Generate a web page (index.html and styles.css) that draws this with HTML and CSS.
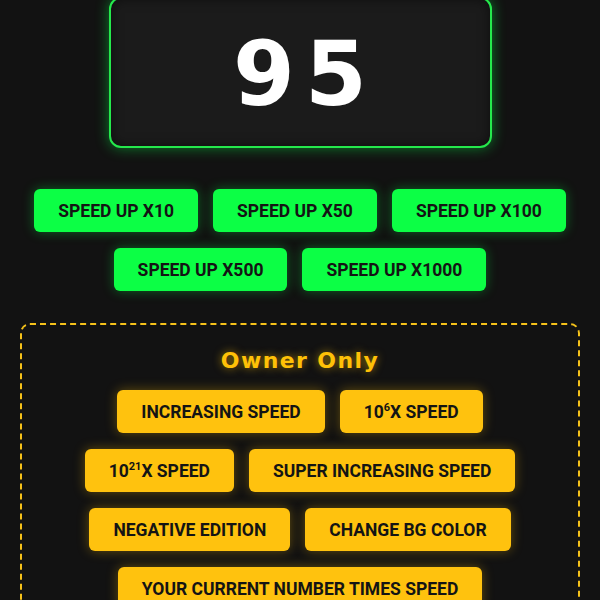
FILE: index.html
```html
<!DOCTYPE html>
<html>
<head>
<meta charset="utf-8">
<link rel="stylesheet" href="styles.css">
</head>
<body>
<main class="page">
  <div class="display"><span class="number">95</span></div>
  <div class="speed-buttons">
    <button class="btn btn-green">SPEED UP X10</button>
    <button class="btn btn-green">SPEED UP X50</button>
    <button class="btn btn-green">SPEED UP X100</button>
    <button class="btn btn-green">SPEED UP X500</button>
    <button class="btn btn-green">SPEED UP X1000</button>
  </div>
  <section class="owner">
    <h2 class="owner-title">Owner Only</h2>
    <div class="owner-buttons">
      <button class="btn btn-yellow">INCREASING SPEED</button>
      <button class="btn btn-yellow">10<sup class="sup">6</sup>X SPEED</button>
      <button class="btn btn-yellow">10<sup class="sup">21</sup>X SPEED</button>
      <button class="btn btn-yellow">SUPER INCREASING SPEED</button>
      <button class="btn btn-yellow">NEGATIVE EDITION</button>
      <button class="btn btn-yellow">CHANGE BG COLOR</button>
      <button class="btn btn-yellow">YOUR CURRENT NUMBER TIMES SPEED</button>
    </div>
  </section>
</main>
</body>
</html>
```
FILE: styles.css
```css
html, body {
  margin: 0;
  padding: 0;
  background: #121212;
  font-family: Roboto, "Liberation Sans", sans-serif;
  overflow: hidden;
}
.page {
  padding: 0 20px;
}
.display {
  box-sizing: border-box;
  width: 383px;
  height: 151px;
  margin: -3px auto 0;
  border: 2px solid #25e84c;
  border-radius: 12px;
  background: #1b1b1b;
  box-shadow: 0 0 14px rgba(0, 255, 70, 0.45), inset 0 0 12px rgba(0, 0, 0, 0.5);
  display: flex;
  align-items: center;
  justify-content: center;
}
.number {
  color: #ffffff;
  font-family: "DejaVu Sans", sans-serif;
  font-weight: bold;
  font-size: 89px;
  letter-spacing: 10px;
  line-height: 1;
  margin-top: 4px;
  margin-right: -10px;
}
.speed-buttons {
  margin-top: 41px;
  display: flex;
  flex-wrap: wrap;
  justify-content: center;
  gap: 16px 15px;
}
.btn {
  box-sizing: border-box;
  height: 43px;
  padding: 0 24px;
  border: none;
  border-radius: 6px;
  font-family: Roboto, "Liberation Sans", sans-serif;
  font-weight: bold;
  font-size: 17.5px;
  color: #141414;
  white-space: nowrap;
}
.btn-green {
  background: #0cff45;
  box-shadow: 0 0 12px rgba(0, 255, 70, 0.35);
}
.btn-yellow {
  background: #ffc20e;
  box-shadow: 0 0 12px rgba(255, 193, 7, 0.35);
}
.sup {
  font-size: 11px;
  line-height: 0;
  vertical-align: 7px;
}
.owner {
  margin-top: 32px;
  border: 2px dashed #f5c21a;
  border-radius: 10px;
  padding: 21px 40px 30px;
}
.owner-title {
  margin: 0 0 14px;
  text-align: center;
  font-family: "DejaVu Sans", sans-serif;
  font-weight: bold;
  font-size: 22px;
  letter-spacing: 1.4px;
  line-height: 30px;
  color: #ffc107;
  text-shadow: 0 0 8px rgba(255, 193, 7, 0.6);
}
.owner-buttons {
  display: flex;
  flex-wrap: wrap;
  justify-content: center;
  gap: 16px 15px;
}
```
